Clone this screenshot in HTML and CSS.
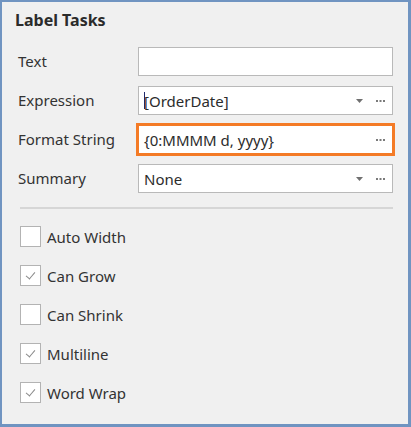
FILE: index.html
```html
<!DOCTYPE html>
<html lang="en">
<head>
  <meta charset="UTF-8">
  <title>Label Tasks</title>
  <link rel="stylesheet" href="styles.css">
</head>
<body>
  <div class="panel">
    <h1 class="title">Label Tasks</h1>

    <div class="props">
      <label class="prop-label">Text</label>
      <div class="editor"></div>

      <label class="prop-label">Expression</label>
      <div class="editor"><span class="caret"></span><span class="value">[OrderDate]</span>
        <svg class="drop" width="7" height="4" viewBox="0 0 7 4"><path d="M0 0h7L3.5 4z" fill="#707070"/></svg>
        <svg class="dots" width="9" height="2" viewBox="0 0 9 2"><rect x="0" width="2" height="2"/><rect x="3.5" width="2" height="2"/><rect x="7" width="2" height="2"/></svg>
      </div>

      <label class="prop-label">Format String</label>
      <div class="editor focused"><span class="value">{0:MMMM d, yyyy}</span>
        <svg class="dots" width="9" height="2" viewBox="0 0 9 2"><rect x="0" width="2" height="2"/><rect x="3.5" width="2" height="2"/><rect x="7" width="2" height="2"/></svg>
      </div>

      <label class="prop-label">Summary</label>
      <div class="editor"><span class="value">None</span>
        <svg class="drop" width="7" height="4" viewBox="0 0 7 4"><path d="M0 0h7L3.5 4z" fill="#707070"/></svg>
        <svg class="dots" width="9" height="2" viewBox="0 0 9 2"><rect x="0" width="2" height="2"/><rect x="3.5" width="2" height="2"/><rect x="7" width="2" height="2"/></svg>
      </div>
    </div>

    <hr class="sep">

    <ul class="checks">
      <li><span class="box"></span>Auto Width</li>
      <li><span class="box checked"></span>Can Grow</li>
      <li><span class="box"></span>Can Shrink</li>
      <li><span class="box checked"></span>Multiline</li>
      <li><span class="box checked"></span>Word Wrap</li>
    </ul>
  </div>
</body>
</html>
```

FILE: styles.css
```css
html, body {
  margin: 0;
  padding: 0;
}
body {
  font-family: 'Noto Sans', 'Open Sans', sans-serif;
  font-size: 15px;
  color: #333;
  background: #f0f0f0;
}
.panel {
  box-sizing: border-box;
  width: 411px;
  height: 427px;
  background: #f0f0f0;
  border: 2px solid #7094c1;
  border-right-width: 3px;
  border-bottom-width: 3px;
  padding: 0 16px;
}
.title {
  margin: 0 0 0 -3px;
  padding-top: 7px;
  height: 38px;
  font-size: 16px;
  font-weight: 700;
  color: #2b2b2b;
  line-height: 22px;
}
.props {
  display: grid;
  grid-template-columns: 120px 255px;
  grid-auto-rows: 29px;
  row-gap: 10px;
  align-items: center;
}
.prop-label {
  color: #333;
  line-height: 29px;
}
.editor {
  box-sizing: border-box;
  height: 29px;
  background: #fff;
  border: 1px solid #b9b9b9;
  display: flex;
  align-items: center;
  padding: 0 7px 0 5px;
  color: #2c2c2c;
}
.editor .value {
  flex: 1;
}
.editor.focused {
  border-color: #f47b26;
  outline: 2px solid #f47b26;
}
.caret {
  width: 1px;
  height: 17px;
  background: #1f2a6e;
  margin-right: -1px;
}
.drop {
  margin-right: 13px;
}
.dots {
  fill: #7a7a7a;
}
.sep {
  border: 0;
  height: 2px;
  background: #d6d6d6;
  margin: 14px 0 0 2px;
  width: 373px;
}
.checks {
  list-style: none;
  margin: 0;
  padding: 17px 0 0 2px;
}
.checks li {
  display: flex;
  align-items: center;
  height: 21px;
  margin-bottom: 18px;
  color: #333;
}
.box {
  box-sizing: border-box;
  width: 21px;
  height: 21px;
  border: 1px solid #b3b3b3;
  background: #fff;
  margin-right: 6px;
  position: relative;
}
.box.checked::after {
  content: "";
  position: absolute;
  left: 7px;
  top: 4px;
  width: 4px;
  height: 8px;
  border: solid #8a8a8a;
  border-width: 0 1.5px 1.5px 0;
  transform: rotate(40deg);
}
```
